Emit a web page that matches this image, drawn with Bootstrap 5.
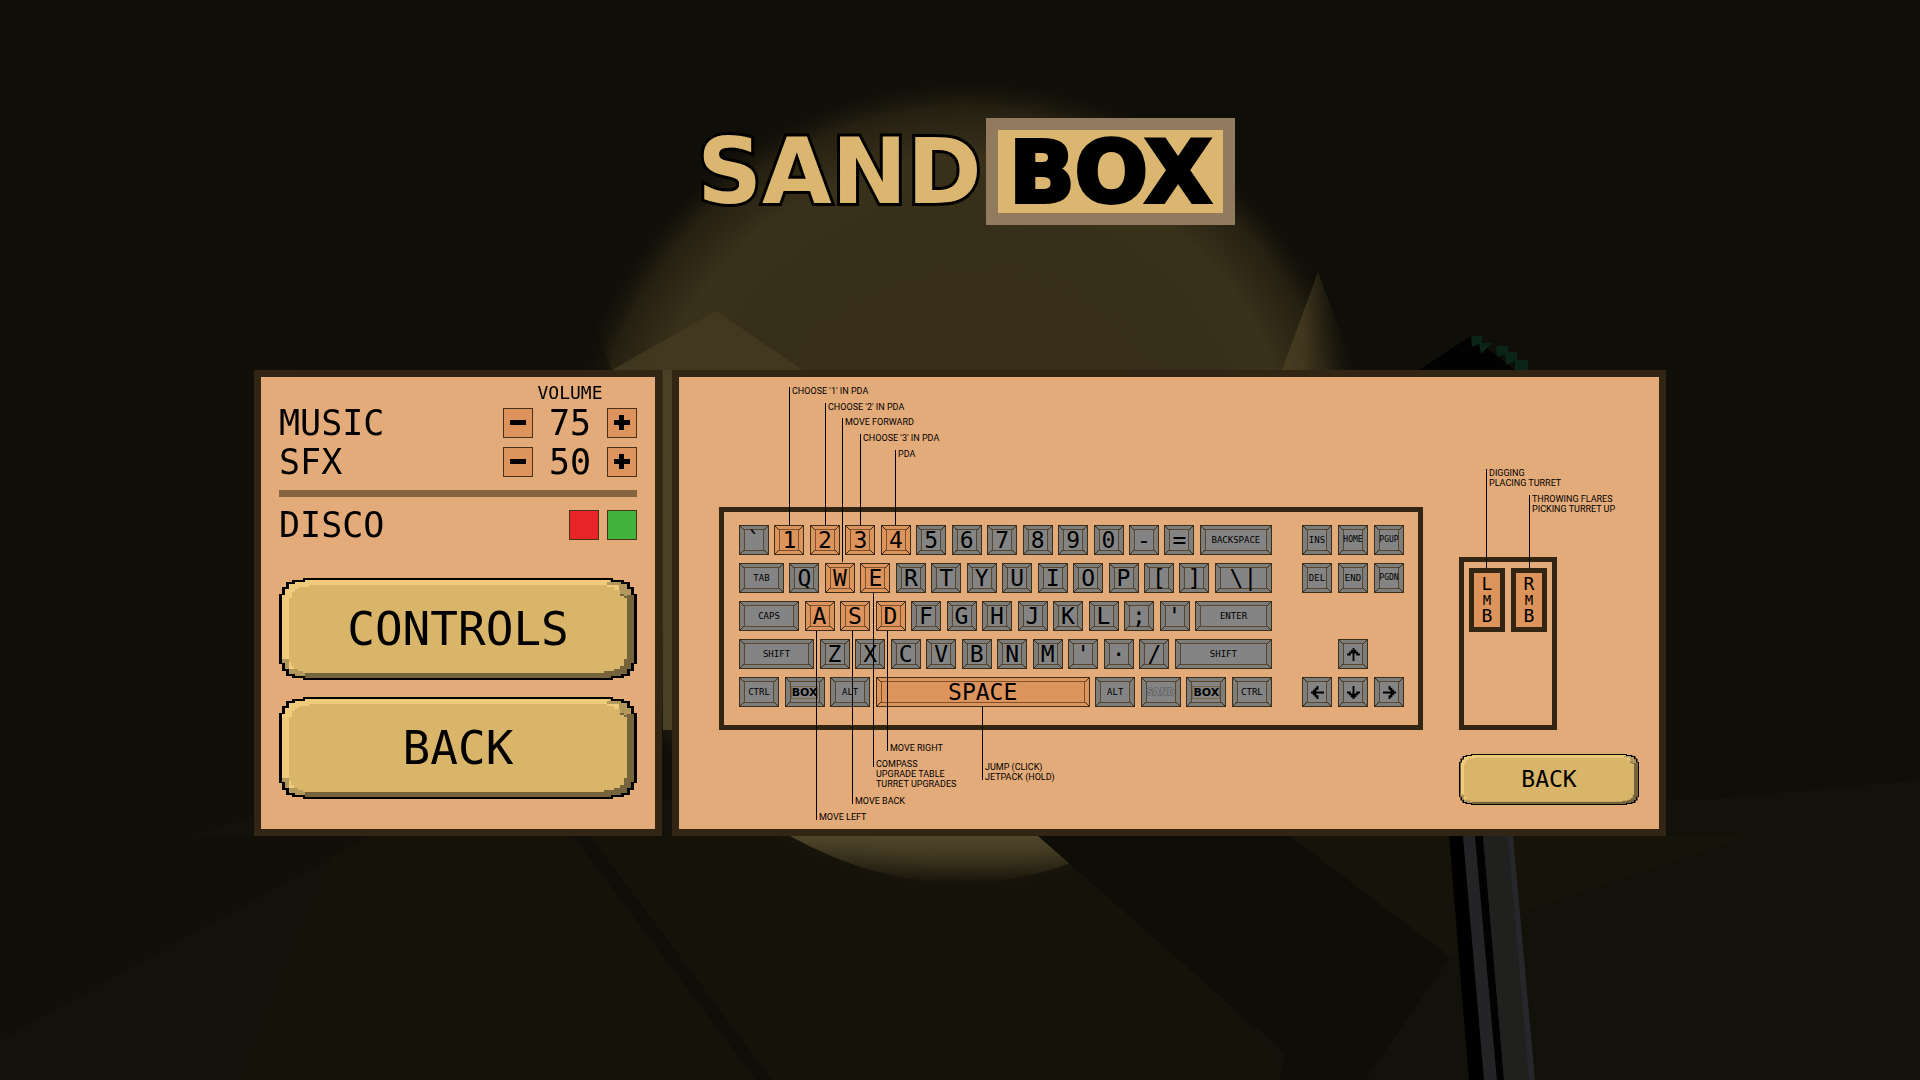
<!DOCTYPE html>
<html lang="en">
<head>
<meta charset="utf-8">
<meta name="viewport" content="width=device-width, initial-scale=1">
<title>Sandbox - Options</title>
<link rel="stylesheet" href="https://cdn.jsdelivr.net/npm/bootstrap@5.3.0/dist/css/bootstrap.min.css">
<style>
:root{--wood:#332513;--skin:#e3ab7a;--hot:#dc935c;--mono:"DejaVu Sans Mono","Liberation Mono",monospace}
body{background:#0f0e08;color:#000;font-family:var(--mono);line-height:1}
.scene{position:fixed;inset:0;width:100%;height:100%;z-index:-1}
.logo{margin:118px 0 145px;padding-left:12px;gap:4px;font-family:"DejaVu Sans","Noto Sans",sans-serif;font-weight:700;font-size:86px;line-height:1}
.logo-sand{color:#dab670;font-size:90px;-webkit-text-stroke:6px #000;paint-order:stroke fill}
.logo-box{background:#dab670;border:12px solid #927a5e;color:#000;-webkit-text-stroke:4px #000;width:249px;height:107px}
.menu-wrap{width:100%;max-width:1412px;gap:10px}
.panel{background:var(--skin);border:7px solid var(--wood)}
.options{flex:0 0 408px;padding:7px 18px 30px}
.vol-col{width:134px}
.vol-title{font-size:18px;margin-bottom:6px}
.opt-row{font-size:35px;height:30px;line-height:30px}
.opt-row + .opt-row{margin-top:9px}
.sq{width:30px;height:30px;border:1px solid #4a3119;background:var(--hot);padding:0;border-radius:0;appearance:none;margin:0;display:block}
.sq svg{display:block;margin:auto}
.sq-off{background:#e82427}
.sq-on{background:#40b43b}
.rule{height:7px;background:#84633f;margin:13px 0;border:0;opacity:1}
.px-btn{position:relative;border:0;background:none;padding:0;width:100%;height:102px;font-size:46px;color:#000;display:flex;align-items:center;justify-content:center}
.px-btn svg{position:absolute;inset:0;width:100%;height:100%}
.px-btn span{position:relative}
.px-btn-sm{height:51px;font-size:23px;margin-top:24px}
.big-btns{margin-top:38px;gap:17px}
.controls{position:relative;flex:1 1 0;padding:130px 20px 23px 40px;gap:36px}
.kb{border:5px solid var(--wood);padding:13px 14px 18px 15px;gap:30px;flex:0 0 704px;height:223px}
.kb-main{flex:1 1 0}
.kb-main,.kb-side{display:flex;flex-direction:column;gap:8px}
.kb-side{width:102px}
.krow{display:flex;justify-content:space-between;height:30px}
.key{--kc:#7d7d7b;position:relative;width:30px;height:30px;flex:none;display:flex;align-items:center;justify-content:center;font-size:23px;border:1px solid #3d2e1a;
background:
linear-gradient(to top right,transparent 42%,#3d2e1a 42%,#3d2e1a 58%,transparent 58%) right bottom/5px 5px no-repeat,
linear-gradient(to top right,transparent 42%,#3d2e1a 42%,#3d2e1a 58%,transparent 58%) left top/5px 5px no-repeat,
linear-gradient(to top left,transparent 42%,#3d2e1a 42%,#3d2e1a 58%,transparent 58%) right top/5px 5px no-repeat,
linear-gradient(to top left,transparent 42%,#3d2e1a 42%,#3d2e1a 58%,transparent 58%) left bottom/5px 5px no-repeat,
var(--kc)}
.key::before{content:"";position:absolute;inset:3px 4px;border:1px solid #58472f;background:#848484}
.key > *{position:relative}
.key.hot{--kc:#dc935c}
.key.hot::before{background:#dc935c;border-color:#7d522d}
.txt{font-size:9px}
.txt-s{font-size:8px}
.w40{width:40px}.w45{width:45px}.w57{width:57px}.w60{width:60px}.w72{width:72px}.w75{width:75px}.w77{width:77px}.w97{width:97px}.w214{width:214px}
.mini{font-family:"DejaVu Sans",sans-serif;font-weight:700;font-size:11px}
.mini-box{border:1px solid #7b6547}
.mini-sand{font-size:9px;color:#858585;-webkit-text-stroke:1px #555;paint-order:stroke fill}
.side-col{width:180px;padding-top:50px}
.mouse{width:98px;height:173px;border:5px solid var(--wood);padding:6px 5px;gap:6px}
.mbtn{flex:1 1 0;height:64px;border:5px solid var(--wood);background:var(--hot);font-size:18px;line-height:18px}
.mbtn small{font-size:14px;line-height:14px}
.call{position:absolute;border-left:1px solid #000;padding-left:2px;font-family:Roboto,"Liberation Sans",sans-serif;font-size:9px;font-weight:400;line-height:10px;white-space:nowrap;margin:0}
.call span{display:block}
.call.up span:first-child{margin-top:-1px}
.call.down{display:flex;flex-direction:column;justify-content:flex-end}
.call.down span:last-child{margin-bottom:-2px}
.c-one{left:110px;top:10px;height:138px}
.c-two{left:146px;top:26px;height:122px}
.c-fwd{left:163px;top:41px;height:144px}
.c-three{left:181px;top:57px;height:91px}
.c-pda{left:216px;top:73px;height:75px}
.c-dig{left:807px;top:92px;height:99px}
.c-throw{left:850px;top:118px;height:73px}
.c-left{left:137px;top:254px;height:189px}
.c-back{left:173px;top:254px;height:173px}
.c-comp{left:194px;top:216px;height:174px}
.c-right{left:208px;top:254px;height:120px}
.c-jump{left:303px;top:329px;height:74px}
.call.c-comp span:last-child{margin-bottom:-22px}
</style>
<script src="https://cdn.jsdelivr.net/npm/bootstrap@5.3.0/dist/js/bootstrap.bundle.min.js"></script>
</head>
<body class="min-vh-100">

<!-- cave backdrop with the lamp glow -->
<svg class="scene" viewBox="0 0 1920 1080" preserveAspectRatio="xMidYMid slice" aria-hidden="true">
  <defs>
    <radialGradient id="glow">
      <stop offset="0" stop-color="#3a3019"/><stop offset=".6" stop-color="#372e19"/><stop offset=".8" stop-color="#3a311b"/>
      <stop offset=".92" stop-color="#2c2514" stop-opacity=".8"/><stop offset="1" stop-color="#17140a" stop-opacity="0"/>
    </radialGradient>
    <linearGradient id="floorlit" x1="0" y1="0" x2="0" y2="1">
      <stop offset="0" stop-color="#50462a"/><stop offset="1" stop-color="#50462a" stop-opacity="0"/>
    </linearGradient>
    <linearGradient id="sliver" x1="0" y1="0" x2="1" y2="0">
      <stop offset="0" stop-color="#4b4024"/><stop offset=".3" stop-color="#463b20"/><stop offset="1" stop-color="#14120a" stop-opacity="0"/>
    </linearGradient>
  </defs>
  <rect width="1920" height="1080" fill="#0f0e08"/>
  <path fill="#110f08" d="M0 0H500L490 160L190 330L300 370V836L0 1040Z"/>
  <path fill="#12110a" d="M0 900L300 800H1700L1920 780V1080H0Z"/>
  <path fill="#15120a" d="M340 836H1100L1290 1080H240Z"/>
  <path fill="#110f08" d="M0 900L150 836H370L0 1040Z"/>
  <circle cx="968" cy="484" r="408" fill="url(#glow)"/>
  <path fill="#453b22" opacity=".8" d="M716 311L803 370H612Z"/>
  <path fill="#0f0e08" opacity=".5" d="M592 318L612 370H570Z"/>
  <path fill="url(#sliver)" opacity=".8" d="M1318 272L1354 370H1282Z"/>
  <path fill="#4a4026" d="M663 370H672V730H663Z"/>
  <path fill="url(#floorlit)" d="M790 836Q960 930 1130 836Z"/>
  <path fill="#100e08" d="M573 836H590L772 1080H756Z"/>
  <path fill="#0e0d08" d="M1038 836H1290L1450 957L1365 1080H1280L1285 1053Z"/>
  <path fill="#15130a" d="M1290 836H1750L1518 914L1450 957Z"/>
  <path fill="#000" d="M1449 836H1463L1485 1080H1469Z"/>
  <path fill="#242427" d="M1463 836H1475L1497 1080H1484Z"/>
  <path fill="#020202" d="M1475 836H1483L1504 1080H1497Z"/>
  <path fill="#20211f" d="M1483 836H1509L1530 1080H1504Z"/>
  <path fill="#26272a" d="M1508 836H1513L1535 1080H1529Z"/>
  <path fill="#010201" d="M1419 370L1471 336L1515 370Z"/>
  <path fill="#0a2419" d="M1471 336H1482V343H1492L1481 354L1479 344L1472 347ZM1496 346H1508V352H1517V360H1528V370H1515V361L1506 365L1505 354L1497 357Z"/>
</svg>

<!-- shared symbols -->
<svg width="0" height="0" class="position-absolute" aria-hidden="true">
  <symbol id="slab" viewBox="0 0 358 102" preserveAspectRatio="none">
    <path d="M24 0H334V2H345V4H351V9H355V16H358V86H355V93H351V98H345V100H334V102H24V100H13V98H7V93H3V86H0V16H3V9H7V4H13V2H24Z"/>
    <path fill="#f0cb7b" d="M26 2H332V4H342V6H348V11H352V17H355V85H352V91H348V96H342V98H332V100H26V98H16V96H10V91H6V85H3V17H6V11H10V6H16V4H26Z"/>
    <path fill="#75633b" d="M348 17H355V85H352V91H348V96H342V98H332V100H26V95H325V93H335V91H341V88H345V81H348Z"/>
    <path fill="#b3985c" d="M332 2V4H342V6H348V11H352V17H348V18H340V7H328V4H331V2ZM3 81H10V91H24V98H16V96H10V91H6V85H3ZM16 91H24V95H26V98H16Z"/>
    <path fill="#d9b569" d="M30 7H328V9H335V12H341V16H345V19H348V81H345V88H341V91H335V93H325V95H24V93H19V91H15V88H12V84H10V20H13V14H16V11H20V9H30Z"/>
    <path fill="#75633b" d="M341 16H345V18H348V20H345V18H341Z"/>
  </symbol>
  <symbol id="arrow" viewBox="0 0 7 7"><path d="M3 0H4V1H5V2H6V3H7V4H5V3H4V7H3V3H2V4H0V3H1V2H2V1H3Z"/></symbol>
</svg>

<header class="logo d-flex justify-content-center align-items-center">
  <span class="logo-sand">SAND</span><span class="logo-box d-flex align-items-center justify-content-center">BOX</span>
</header>

<main class="menu-wrap mx-auto d-flex">
  <section class="panel options" aria-label="Options">
    <div class="vol-col vol-title ms-auto text-center">VOLUME</div>
    <div class="opt-row d-flex align-items-center justify-content-between">
      <span>MUSIC</span>
      <div class="vol-col d-flex align-items-center justify-content-between">
        <button class="sq" type="button" aria-label="Music down"><svg width="16" height="16"><path d="M0 5H16V10H0Z"/></svg></button>
        <output>75</output>
        <button class="sq" type="button" aria-label="Music up"><svg width="16" height="16"><path d="M0 5H5V0H10V5H16V10H10V15H5V10H0Z"/></svg></button>
      </div>
    </div>
    <div class="opt-row d-flex align-items-center justify-content-between">
      <span>SFX</span>
      <div class="vol-col d-flex align-items-center justify-content-between">
        <button class="sq" type="button" aria-label="SFX down"><svg width="16" height="16"><path d="M0 5H16V10H0Z"/></svg></button>
        <output>50</output>
        <button class="sq" type="button" aria-label="SFX up"><svg width="16" height="16"><path d="M0 5H5V0H10V5H16V10H10V15H5V10H0Z"/></svg></button>
      </div>
    </div>
    <hr class="rule">
    <div class="opt-row d-flex align-items-center justify-content-between">
      <span>DISCO</span>
      <div class="d-flex gap-2">
        <input class="sq sq-off" type="radio" name="disco" aria-label="Disco off">
        <input class="sq sq-on" type="radio" name="disco" aria-label="Disco on">
      </div>
    </div>
    <div class="big-btns d-flex flex-column">
      <button class="px-btn" type="button"><svg aria-hidden="true"><use href="#slab"/></svg><span>CONTROLS</span></button>
      <button class="px-btn" type="button"><svg aria-hidden="true"><use href="#slab"/></svg><span>BACK</span></button>
    </div>
  </section>

  <section class="panel controls d-flex align-items-start" aria-label="Controls">
    <div class="kb d-flex">
      <div class="kb-main">
        <div class="krow">
          <div class="key"><span>`</span></div><div class="key hot"><span>1</span></div><div class="key hot"><span>2</span></div><div class="key hot"><span>3</span></div><div class="key hot"><span>4</span></div><div class="key"><span>5</span></div><div class="key"><span>6</span></div><div class="key"><span>7</span></div><div class="key"><span>8</span></div><div class="key"><span>9</span></div><div class="key"><span>0</span></div><div class="key"><span>-</span></div><div class="key"><span>=</span></div><div class="key txt w72"><span>BACKSPACE</span></div>
        </div>
        <div class="krow">
          <div class="key txt w45"><span>TAB</span></div><div class="key"><span>Q</span></div><div class="key hot"><span>W</span></div><div class="key hot"><span>E</span></div><div class="key"><span>R</span></div><div class="key"><span>T</span></div><div class="key"><span>Y</span></div><div class="key"><span>U</span></div><div class="key"><span>I</span></div><div class="key"><span>O</span></div><div class="key"><span>P</span></div><div class="key"><span>[</span></div><div class="key"><span>]</span></div><div class="key w57"><span>\|</span></div>
        </div>
        <div class="krow">
          <div class="key txt w60"><span>CAPS</span></div><div class="key hot"><span>A</span></div><div class="key hot"><span>S</span></div><div class="key hot"><span>D</span></div><div class="key"><span>F</span></div><div class="key"><span>G</span></div><div class="key"><span>H</span></div><div class="key"><span>J</span></div><div class="key"><span>K</span></div><div class="key"><span>L</span></div><div class="key"><span>;</span></div><div class="key"><span>'</span></div><div class="key txt w77"><span>ENTER</span></div>
        </div>
        <div class="krow">
          <div class="key txt w75"><span>SHIFT</span></div><div class="key"><span>Z</span></div><div class="key"><span>X</span></div><div class="key"><span>C</span></div><div class="key"><span>V</span></div><div class="key"><span>B</span></div><div class="key"><span>N</span></div><div class="key"><span>M</span></div><div class="key"><span>'</span></div><div class="key"><span>·</span></div><div class="key"><span>/</span></div><div class="key txt w97"><span>SHIFT</span></div>
        </div>
        <div class="krow">
          <div class="key txt w40"><span>CTRL</span></div><div class="key w40"><span class="mini mini-box">BOX</span></div><div class="key txt w40"><span>ALT</span></div><div class="key hot w214"><span>SPACE</span></div><div class="key txt w40"><span>ALT</span></div><div class="key w40"><span class="mini mini-sand">SAND</span></div><div class="key w40"><span class="mini mini-box">BOX</span></div><div class="key txt w40"><span>CTRL</span></div>
        </div>
      </div>
      <div class="kb-side">
        <div class="krow"><div class="key txt"><span>INS</span></div><div class="key txt-s"><span>HOME</span></div><div class="key txt-s"><span>PGUP</span></div></div>
        <div class="krow"><div class="key txt"><span>DEL</span></div><div class="key txt"><span>END</span></div><div class="key txt-s"><span>PGDN</span></div></div>
        <div class="krow"></div>
        <div class="krow justify-content-center"><div class="key"><svg width="13" height="13" aria-label="Up"><use href="#arrow"/></svg></div></div>
        <div class="krow">
          <div class="key"><svg width="13" height="13" viewBox="0 0 7 7" aria-label="Left"><use href="#arrow" width="7" height="7" transform="rotate(-90 3.5 3.5)"/></svg></div>
          <div class="key"><svg width="13" height="13" viewBox="0 0 7 7" aria-label="Down"><use href="#arrow" width="7" height="7" transform="rotate(180 3.5 3.5)"/></svg></div>
          <div class="key"><svg width="13" height="13" viewBox="0 0 7 7" aria-label="Right"><use href="#arrow" width="7" height="7" transform="rotate(90 3.5 3.5)"/></svg></div>
        </div>
      </div>
    </div>

    <div class="side-col">
      <div class="mouse d-flex">
        <div class="mbtn d-flex flex-column align-items-center justify-content-center"><span>L</span><small>M</small><span>B</span></div>
        <div class="mbtn d-flex flex-column align-items-center justify-content-center"><span>R</span><small>M</small><span>B</span></div>
      </div>
      <button class="px-btn px-btn-sm" type="button"><svg aria-hidden="true"><use href="#slab"/></svg><span>BACK</span></button>
    </div>

    <!-- leader lines and notes over the diagram -->
    <p class="call up c-one"><span>CHOOSE '1' IN PDA</span></p>
    <p class="call up c-two"><span>CHOOSE '2' IN PDA</span></p>
    <p class="call up c-fwd"><span>MOVE FORWARD</span></p>
    <p class="call up c-three"><span>CHOOSE '3' IN PDA</span></p>
    <p class="call up c-pda"><span>PDA</span></p>
    <p class="call up c-dig"><span>DIGGING</span><span>PLACING TURRET</span></p>
    <p class="call up c-throw"><span>THROWING FLARES</span><span>PICKING TURRET UP</span></p>
    <p class="call down c-left"><span>MOVE LEFT</span></p>
    <p class="call down c-back"><span>MOVE BACK</span></p>
    <p class="call down c-comp"><span>COMPASS</span><span>UPGRADE TABLE</span><span>TURRET UPGRADES</span></p>
    <p class="call down c-right"><span>MOVE RIGHT</span></p>
    <p class="call down c-jump"><span>JUMP (CLICK)</span><span>JETPACK (HOLD)</span></p>
  </section>
</main>
</body>
</html>
